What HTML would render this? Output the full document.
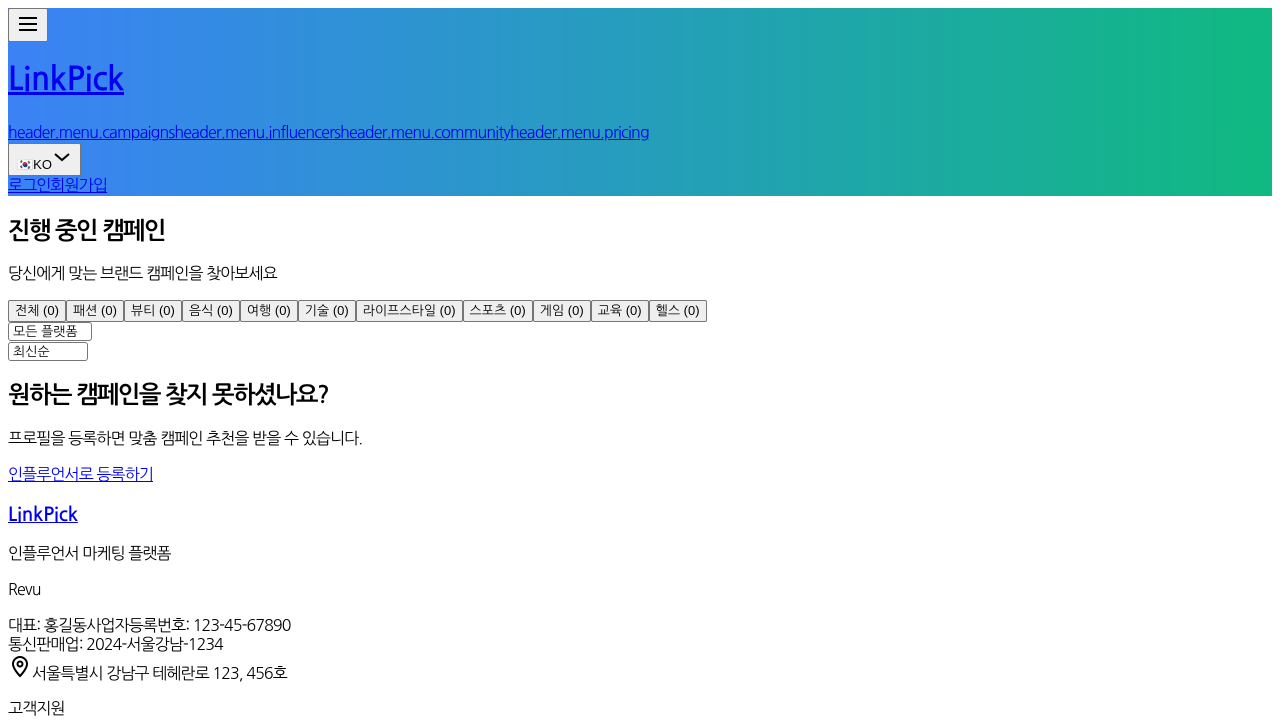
<!DOCTYPE html>
<html><head><meta charset="utf-8"><style>
body{margin:0;font-family:"NanumGothic","Noto Sans CJK KR",sans-serif;font-size:16px;color:#000;letter-spacing:-0.9px;}
.a{position:absolute;white-space:nowrap;line-height:1;}
a{color:#00e;text-decoration:underline;}
header{position:absolute;left:8px;top:8px;width:1264px;height:188px;background:linear-gradient(90deg,#3b82f6,#10b981);}
.btn{position:absolute;background:#efefef;border:1px solid #767676;border-radius:2px;box-sizing:border-box;}
.tabs{position:absolute;left:8px;top:300px;display:flex;letter-spacing:0;}
.tabs span{font-family:"Liberation Sans","NanumGothic",sans-serif;font-size:13px;background:#efefef;border:1px solid #767676;border-radius:2px;height:22px;line-height:20px;box-sizing:border-box;padding:0 6px;}
.sel{position:absolute;left:8px;border:1px solid #767676;border-radius:3px;box-sizing:border-box;height:19px;font-size:13px;line-height:17px;padding-left:4px;background:#fff;letter-spacing:0;}
</style></head><body>
<header></header>
<div class="btn" style="left:8px;top:8px;width:40px;height:34px;">
<svg width="38" height="32" viewBox="0 0 38 32"><path d="M10 9h18M10 15h18M10 21h18" stroke="#000" stroke-width="2"/></svg></div>
<a class="a" href="#" style="left:8px;top:63px;font-size:32px;font-weight:bold;letter-spacing:-0.2px;">LinkPick</a>
<a class="a" href="#" style="left:8px;top:125px;font-size:16px;letter-spacing:-0.8px;">header.menu.campaignsheader.menu.influencersheader.menu.communityheader.menu.pricing</a>
<div class="btn" style="left:8px;top:143px;width:73px;height:33px;"><span class="a" style="left:8px;top:14px;font-size:13px;font-family:'Liberation Sans',sans-serif;letter-spacing:0;">🇰🇷KO</span>
<svg style="position:absolute;left:44px;top:6px" width="18" height="14"><path d="M2 4l7 6 7-6" stroke="#000" stroke-width="2" fill="none"/></svg></div>
<a class="a" href="#" style="left:8px;top:178px;">로그인회원가입</a>
<div class="a" style="left:8px;top:219px;font-size:24px;font-weight:bold;letter-spacing:-1.6px;">진행 중인 캠페인</div>
<div class="a" style="left:8px;top:266px;">당신에게 맞는 브랜드 캠페인을 찾아보세요</div>
<div class="tabs"><span>전체 (0)</span><span>패션 (0)</span><span>뷰티 (0)</span><span>음식 (0)</span><span>여행 (0)</span><span>기술 (0)</span><span>라이프스타일 (0)</span><span>스포츠 (0)</span><span>게임 (0)</span><span>교육 (0)</span><span>헬스 (0)</span></div>
<div class="sel" style="top:322px;width:84px;">모든 플랫폼 ﹀</div>
<div class="sel" style="top:342px;width:80px;">최신순</div>
<div class="a" style="left:8px;top:383px;font-size:24px;font-weight:bold;letter-spacing:-1.6px;">원하는 캠페인을 찾지 못하셨나요?</div>
<div class="a" style="left:8px;top:431px;">프로필을 등록하면 맞춤 캠페인 추천을 받을 수 있습니다.</div>
<a class="a" href="#" style="left:8px;top:467px;">인플루언서로 등록하기</a>
<a class="a" href="#" style="left:8px;top:505px;font-size:19px;font-weight:bold;letter-spacing:0px;">LinkPick</a>
<div class="a" style="left:8px;top:546px;">인플루언서 마케팅 플랫폼</div>
<div class="a" style="left:8px;top:582px;">Revu</div>
<div class="a" style="left:8px;top:618px;">대표: 홍길동사업자등록번호: 123-45-67890</div>
<div class="a" style="left:8px;top:637px;">통신판매업: 2024-서울강남-1234</div>
<svg style="position:absolute;left:8px;top:654px" width="24" height="24" viewBox="0 0 24 24"><path d="M12 22s7-7 7-12a7 7 0 0 0-14 0c0 5 7 12 7 12z" fill="none" stroke="#000" stroke-width="2"/><circle cx="12" cy="10" r="2.5" fill="none" stroke="#000" stroke-width="2"/></svg>
<div class="a" style="left:32px;top:666px;">서울특별시 강남구 테헤란로 123, 456호</div>
<div class="a" style="left:8px;top:701px;">고객지원</div>
</body></html>
